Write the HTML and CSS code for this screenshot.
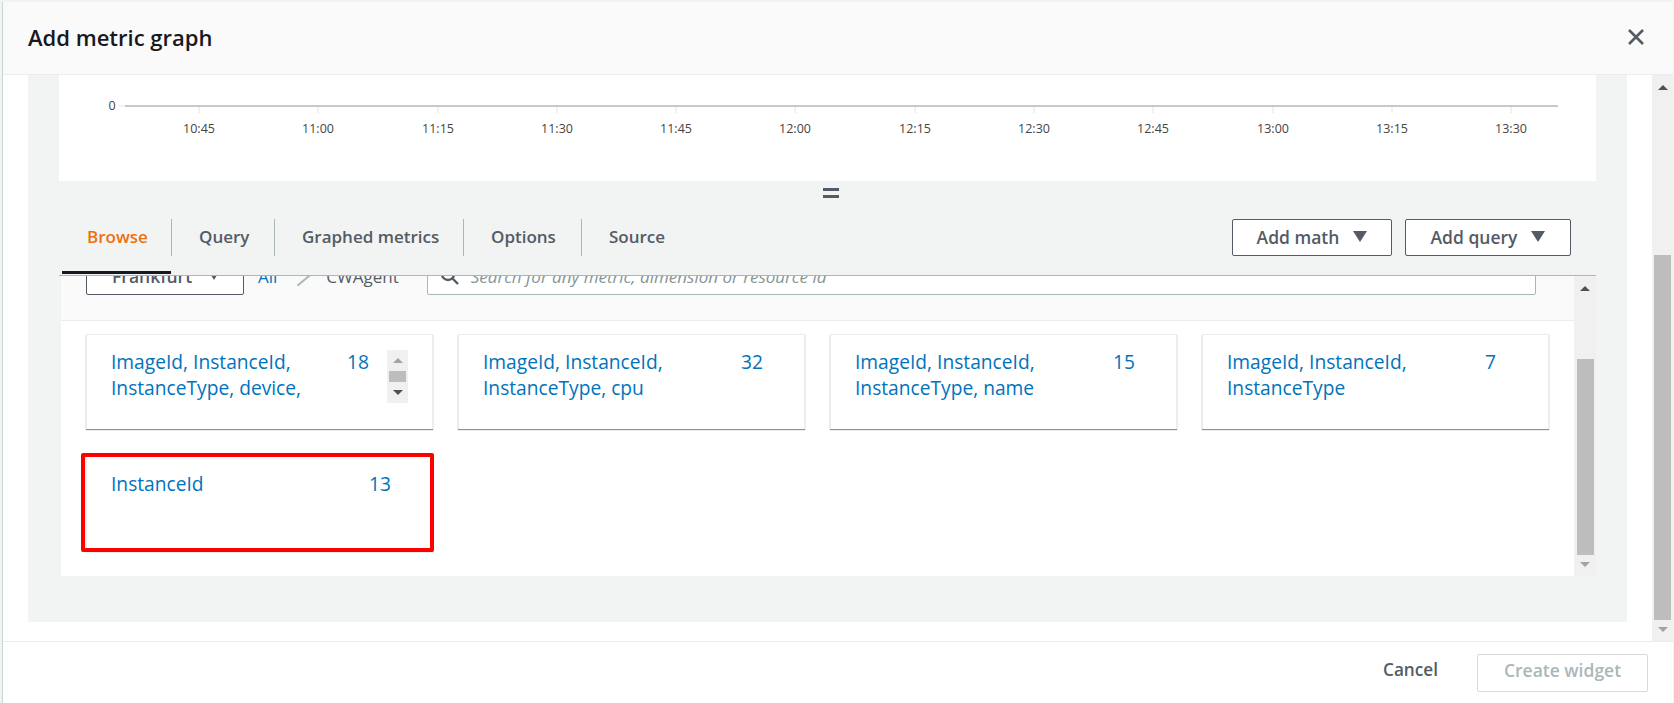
FILE: index.html
```html
<!DOCTYPE html>
<html lang="en">

<head>
    <meta charset="UTF-8">
    <title>Add metric graph</title>
    <link rel="stylesheet" href="styles.css">
</head>

<body>
    <div class="modal">
        <header class="modal-head">
            <h1 class="modal-title">Add metric graph</h1>
            <svg class="close-icon" width="18" height="18" viewBox="0 0 18 18">
                <path d="M2 2 L16 16 M16 2 L2 16" />
            </svg>
        </header>

        <div class="modal-body">
            <div class="modal-content">
                <section class="panel">
                    <div class="graph">
                        <svg class="chart" width="1537" height="106" viewBox="0 0 1537 106">
                            <line class="axis-stub" x1="60" y1="31" x2="66" y2="31" />
                            <line class="axis" x1="66" y1="31" x2="1499" y2="31" />
                            <g class="ticks">
                                <line x1="140" y1="32" x2="140" y2="38" />
                                <line x1="259" y1="32" x2="259" y2="38" />
                                <line x1="379" y1="32" x2="379" y2="38" />
                                <line x1="498" y1="32" x2="498" y2="38" />
                                <line x1="617" y1="32" x2="617" y2="38" />
                                <line x1="736" y1="32" x2="736" y2="38" />
                                <line x1="856" y1="32" x2="856" y2="38" />
                                <line x1="975" y1="32" x2="975" y2="38" />
                                <line x1="1094" y1="32" x2="1094" y2="38" />
                                <line x1="1214" y1="32" x2="1214" y2="38" />
                                <line x1="1333" y1="32" x2="1333" y2="38" />
                                <line x1="1452" y1="32" x2="1452" y2="38" />
                            </g>
                            <g class="labels">
                                <text x="53" y="35">0</text>
                                <text x="140" y="58">10:45</text>
                                <text x="259" y="58">11:00</text>
                                <text x="379" y="58">11:15</text>
                                <text x="498" y="58">11:30</text>
                                <text x="617" y="58">11:45</text>
                                <text x="736" y="58">12:00</text>
                                <text x="856" y="58">12:15</text>
                                <text x="975" y="58">12:30</text>
                                <text x="1094" y="58">12:45</text>
                                <text x="1214" y="58">13:00</text>
                                <text x="1333" y="58">13:15</text>
                                <text x="1452" y="58">13:30</text>
                            </g>
                        </svg>
                    </div>

                    <div class="tools">
                        <div class="resize-handle"></div>
                        <div class="tool-row">
                            <nav class="tabs">
                                <a class="tab tab-active">Browse</a>
                                <a class="tab tab-query">Query</a>
                                <a class="tab tab-graphed">Graphed metrics</a>
                                <a class="tab tab-options">Options</a>
                                <a class="tab">Source</a>
                            </nav>
                            <div class="tool-buttons">
                                <button class="btn btn-math">Add math <span class="caret"></span></button>
                                <button class="btn btn-query">Add query <span class="caret"></span></button>
                            </div>
                        </div>
                    </div>

                    <div class="browse">
                        <div class="browse-main">
                            <div class="filter-clip">
                                <div class="filter-row">
                                    <div class="region">Frankfurt <span class="caret-small"></span></div>
                                    <a class="crumb-link">All</a>
                                    <svg class="crumb-slash" width="24" height="20" viewBox="0 0 24 20">
                                        <path d="M24 0 L0 20" />
                                    </svg>
                                    <span class="crumb">CWAgent</span>
                                    <div class="search">
                                        <svg class="search-icon" width="20" height="20" viewBox="0 0 20 20">
                                            <circle cx="8" cy="8" r="6" />
                                            <path d="M12.5 12.5 L18 18" />
                                        </svg>
                                        <span class="search-text">Search for any metric, dimension or resource id</span>
                                    </div>
                                </div>
                            </div>

                            <div class="cards">
                                <div class="card">
                                    <div class="card-body">
                                        <a class="card-label card-label-short">ImageId, InstanceId, InstanceType, device,</a>
                                        <a class="card-count card-count-short">18</a>
                                        <div class="mini-scroll">
                                            <span class="arrow-up arrow-off"></span>
                                            <span class="mini-thumb"></span>
                                            <span class="arrow-down"></span>
                                        </div>
                                    </div>
                                </div>
                                <div class="card">
                                    <div class="card-body">
                                        <a class="card-label">ImageId, InstanceId, InstanceType, cpu</a>
                                        <a class="card-count">32</a>
                                    </div>
                                </div>
                                <div class="card">
                                    <div class="card-body">
                                        <a class="card-label">ImageId, InstanceId, InstanceType, name</a>
                                        <a class="card-count">15</a>
                                    </div>
                                </div>
                                <div class="card">
                                    <div class="card-body">
                                        <a class="card-label">ImageId, InstanceId, InstanceType</a>
                                        <a class="card-count">7</a>
                                    </div>
                                </div>
                                <div class="card">
                                    <div class="card-body">
                                        <a class="card-label">InstanceId</a>
                                        <a class="card-count">13</a>
                                    </div>
                                    <div class="highlight"></div>
                                </div>
                            </div>
                        </div>

                        <div class="inner-scroll">
                            <span class="arrow-box"><span class="arrow-up"></span></span>
                            <span class="inner-thumb"></span>
                            <span class="arrow-box-end"><span class="arrow-down arrow-off"></span></span>
                        </div>
                    </div>
                </section>
            </div>

            <div class="page-scroll">
                <span class="arrow-box"><span class="arrow-up"></span></span>
                <span class="page-thumb"></span>
                <span class="arrow-box-end"><span class="arrow-down arrow-off"></span></span>
            </div>
        </div>

        <footer class="modal-foot">
            <a class="cancel">Cancel</a>
            <button class="btn-create">Create widget</button>
        </footer>
    </div>
</body>

</html>
```

FILE: styles.css
```css
* {
    margin: 0;
    padding: 0;
    box-sizing: border-box;
}

html,
body {
    height: 100%;
    overflow: hidden;
}

body {
    padding: 2px 1px 0 2px;
    background: #f2f3f3;
    font-family: "Open Sans", "Liberation Sans", sans-serif;
    color: #16191f;
}

.modal {
    display: flex;
    flex-direction: column;
    height: 701px;
    background: #fff;
    border-left: 1px solid #ccd3d3;
}

/* header */
.modal-head {
    display: flex;
    align-items: center;
    justify-content: space-between;
    height: 73px;
    padding: 0 28px 2px 25px;
    background: #fafafa;
    border-bottom: 1px solid #eaeded;
}

.modal-title {
    font-size: 22px;
    font-weight: 600;
}

.close-icon path {
    fill: none;
    stroke: #545b64;
    stroke-width: 2.6;
}

/* body */
.modal-body {
    display: flex;
    flex: 1;
    min-height: 0;
}

.modal-content {
    flex: 1;
    padding: 0 25px 19px;
}

.panel {
    height: 100%;
    padding: 0 31px 46px;
    background: #f2f3f3;
}

.graph {
    height: 106px;
    background: #fff;
}

.chart {
    display: block;
}

.axis {
    stroke: #c8c8c8;
    stroke-width: 2;
}

.axis-stub {
    stroke: #e6e6e6;
    stroke-width: 1;
}

.ticks line {
    stroke: #e2e2e2;
    stroke-width: 1;
}

.labels text {
    font-size: 12.5px;
    fill: #444;
    text-anchor: middle;
}

/* tabs row */
.tools {
    height: 95px;
    padding-top: 7px;
    border-bottom: 1px solid #aab7b8;
}

.resize-handle {
    width: 16px;
    height: 10px;
    margin: 0 0 21px 764px;
    border-top: 3px solid #545b64;
    border-bottom: 3px solid #545b64;
}

.tool-row {
    display: flex;
    justify-content: space-between;
    height: 37px;
    padding: 0 25px 0 3px;
}

.tabs {
    display: flex;
}

.tab {
    position: relative;
    display: flex;
    align-items: center;
    padding: 0 0 2px 27px;
    border-right: 1px solid #aab7b8;
    font-size: 17px;
    font-weight: 600;
    color: #545b64;
}

.tab:last-child {
    border-right: 0;
}

.tab-active {
    width: 110px;
    padding-left: 25px;
    color: #ec7211;
}

.tab-query {
    width: 103px;
}

.tab-graphed {
    width: 189px;
}

.tab-options {
    width: 118px;
}

.tab-active::after {
    content: "";
    position: absolute;
    left: 0;
    right: 0;
    bottom: -18px;
    height: 3px;
    background: #16191f;
}

.tool-buttons {
    display: flex;
    gap: 13px;
}

.btn {
    display: flex;
    align-items: center;
    justify-content: center;
    gap: 14px;
    padding-bottom: 2px;
    background: #fff;
    border: 1px solid #545b64;
    border-radius: 2px;
    font-family: inherit;
    font-size: 17.5px;
    font-weight: 600;
    color: #545b64;
}

.btn-math {
    width: 160px;
}

.btn-query {
    width: 166px;
}

.caret {
    width: 0;
    height: 0;
    border-left: 7px solid transparent;
    border-right: 7px solid transparent;
    border-top: 11px solid #545b64;
}

/* browse area */
.browse {
    display: flex;
    height: 300px;
    margin-left: 2px;
    background: #fff;
}

.browse-main {
    flex: 1;
    min-width: 0;
}

.filter-clip {
    height: 45px;
    overflow: hidden;
    background: #fafafa;
    border-bottom: 1px solid #eaeded;
}

.filter-row {
    display: flex;
    align-items: center;
    height: 38px;
    margin-top: -19px;
    padding-left: 25px;
    font-size: 17px;
}

.region {
    display: flex;
    align-items: center;
    justify-content: space-between;
    width: 158px;
    height: 38px;
    padding: 0 24px 0 25px;
    background: #fff;
    border: 1px solid #545b64;
    border-radius: 2px;
    color: #545b64;
    font-size: 17.5px;
    font-weight: 600;
}

.caret-small {
    width: 0;
    height: 0;
    border-left: 5px solid transparent;
    border-right: 5px solid transparent;
    border-top: 8px solid #545b64;
}

.crumb-link {
    margin-left: 14px;
    color: #0073bb;
}

.crumb-slash {
    flex: none;
    margin-left: 20px;
}

.crumb-slash path {
    fill: none;
    stroke: #aab7b8;
    stroke-width: 2;
}

.crumb {
    margin-left: 5px;
    color: #545b64;
}

.search {
    display: flex;
    align-items: center;
    flex: none;
    width: 1109px;
    height: 38px;
    margin-left: 28px;
    padding-left: 12px;
    background: #fff;
    border: 1px solid #aab7b8;
    border-radius: 2px;
}

.search-icon circle,
.search-icon path {
    fill: none;
    stroke: #545b64;
    stroke-width: 2.4;
}

.search-text {
    margin-left: 11px;
    font-style: italic;
    color: #879596;
}

.cards {
    display: grid;
    grid-template-columns: repeat(4, 347px);
    gap: 27px 25px;
    padding: 13px 25px 0;
}

.card {
    position: relative;
    height: 95px;
    padding: 14px 0 0 24px;
    background: #fff;
    border: 1px solid #eaeded;
    border-bottom: 0;
    box-shadow: 0 1px 1px #879596;
}

.card-body {
    display: flex;
    height: 54px;
    font-size: 19.2px;
    line-height: 26px;
}

.card-label {
    flex: none;
    width: 258px;
    padding-right: 50px;
    color: #0073bb;
}

.card-label-short {
    width: 236px;
    padding-right: 30px;
    height: 52px;
    overflow: hidden;
}

.card-count {
    color: #0073bb;
}

.card-count-short {
    flex: none;
    width: 40px;
}

.mini-scroll {
    display: flex;
    flex-direction: column;
    align-items: center;
    justify-content: space-between;
    flex: none;
    width: 21px;
    height: 53px;
    margin-top: 1px;
    padding: 8px 0;
    background: #f0f0f0;
}

.mini-thumb {
    width: 17px;
    height: 11px;
    background: #bdbdbd;
}

.arrow-up,
.arrow-down {
    display: block;
    width: 0;
    height: 0;
    border-left: 5px solid transparent;
    border-right: 5px solid transparent;
}

.arrow-up {
    border-bottom: 5px solid #505050;
}

.arrow-down {
    border-top: 5px solid #505050;
}

.arrow-up.arrow-off {
    border-bottom-color: #a3a3a3;
}

.arrow-down.arrow-off {
    border-top-color: #a3a3a3;
}

.highlight {
    position: absolute;
    top: -4px;
    left: -6px;
    right: -2px;
    bottom: -1px;
    border: 4px solid #f00;
    border-radius: 2px;
}

/* scrollbars */
.inner-scroll,
.page-scroll {
    display: flex;
    flex-direction: column;
    align-items: center;
    flex: none;
    background: #f0f0f0;
}

.inner-scroll {
    width: 22px;
}

.page-scroll {
    width: 21px;
}

.arrow-box {
    display: flex;
    justify-content: center;
    flex: none;
    padding-top: 10px;
}

.arrow-box-end {
    display: flex;
    justify-content: center;
    flex: none;
    height: 21px;
    padding-top: 7px;
}

.inner-thumb {
    width: 17px;
    height: 196px;
    margin-top: auto;
    background: #bdbdbd;
}

.page-thumb {
    width: 17px;
    height: 365px;
    margin-top: auto;
    background: #bdbdbd;
}

/* footer */
.modal-foot {
    display: flex;
    align-items: center;
    justify-content: flex-end;
    gap: 39px;
    height: 62px;
    padding: 0 25px 0 0;
    border-top: 1px solid #eaeded;
}

.cancel {
    padding-bottom: 6px;
    font-size: 17.2px;
    font-weight: 600;
    color: #545b64;
}

.btn-create {
    width: 171px;
    height: 38px;
    padding-bottom: 5px;
    background: #fff;
    border: 1px solid #d5dbdb;
    border-radius: 2px;
    font-family: inherit;
    font-size: 17.5px;
    font-weight: 600;
    color: #aab7b8;
}
```
